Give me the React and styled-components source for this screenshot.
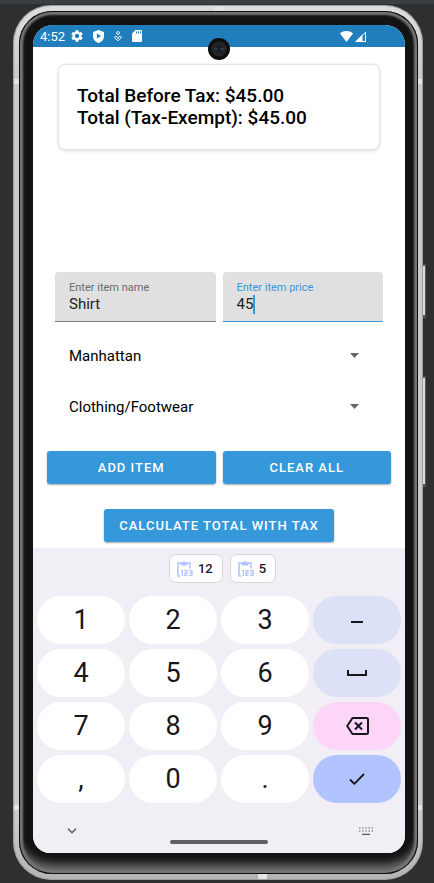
import React, { useState } from "react";
import styled, { createGlobalStyle } from "styled-components";

const GlobalStyle = createGlobalStyle`
  *, *::before, *::after { box-sizing: border-box; }
  body {
    margin: 0;
    background: #2d2f31;
    font-family: Roboto, "Liberation Sans", sans-serif;
    color: #000;
  }
  button, input, select { font: inherit; color: inherit; margin: 0; }
`;

const Workspace = styled.div`
  min-height: 100vh;
  padding: 1px 11px 3px 13px;
  border-top: 4px solid #3c3f41;
  display: flex;
`;

const Phone = styled.div`
  position: relative;
  flex: 1;
  display: flex;
  padding: 6px 5px 6px 6px;
  border-radius: 38px;
  background:
    linear-gradient(#e6e6e6, #e6e6e6) 50% 0 / 9px 6px no-repeat,
    linear-gradient(#e6e6e6, #e6e6e6) 61% 100% / 9px 6px no-repeat,
    linear-gradient(#e6e6e6, #e6e6e6) 0 74px / 6px 5px no-repeat,
    linear-gradient(#e6e6e6, #e6e6e6) 100% 74px / 6px 5px no-repeat,
    linear-gradient(#e6e6e6, #e6e6e6) 0 92% / 6px 5px no-repeat,
    linear-gradient(#e6e6e6, #e6e6e6) 100% 92% / 6px 5px no-repeat,
    linear-gradient(to bottom, #dedede, #cbcbcb 8%, #cbcbcb 92%, #b4b4b4);
  box-shadow: inset 0 0 1px 1px #9b9b9b;
`;

const HardwareKey = styled.span`
  position: absolute;
  left: 100%;
  top: ${(p) => p.$top}px;
  width: 3px;
  height: ${(p) => p.$length}px;
  background: #dcdcdc;
  border: solid #555;
  border-width: 2px 1px 3px 0;
`;

const Bezel = styled.div`
  flex: 1;
  display: flex;
  padding: 14px 13px 21px 14px;
  border-radius: 33px;
  background: #131313;
  box-shadow:
    inset 0 0 0 1px #0c0c0c,
    inset 0 0 2px 4px #757575,
    inset 0 -13px 8px -3px #6c6c6c;
`;

const Screen = styled.div`
  position: relative;
  flex: 1;
  min-width: 0;
  display: flex;
  flex-direction: column;
  overflow: hidden;
  border-radius: 20px 20px 17px 17px;
  background: #fff;
`;

const StatusBar = styled.header`
  height: 22px;
  padding: 0 39px 0 7px;
  display: flex;
  align-items: center;
  justify-content: space-between;
  background: #217ebd;
  color: #fff;
  font-size: 13px;
`;

const StatusGroup = styled.div`
  display: flex;
  align-items: center;
  gap: ${(p) => p.$gap}px;
`;

const Camera = styled.span`
  position: absolute;
  top: 13px;
  left: 50%;
  width: 22px;
  height: 22px;
  margin-left: -11px;
  border-radius: 50%;
  background:
    radial-gradient(circle at 8px 11px, #2c5660 0, transparent 2px),
    radial-gradient(circle at 14px 11px, #34507c 0, transparent 2px),
    radial-gradient(circle, #1a1b1d 0 3px, #232426 5px 7px, #0e0e0f 8px);
`;

const Content = styled.main`
  flex: 1;
  padding: 18px 14px 6px;
  display: flex;
  flex-direction: column;
`;

const TotalsCard = styled.section`
  margin: 0 12px;
  min-height: 82px;
  padding: 20px 18px;
  border-radius: 6px;
  background: #fff;
  box-shadow: 0 0 2px 1px #dedede, 0 2px 4px #e4e4e4;
  font-size: 19px;
  font-weight: 500;
  line-height: 22px;
`;

const TotalLine = styled.p`
  margin: 0;
`;

const ItemList = styled.ul`
  flex: 1;
  margin: 0;
  padding: 0;
`;

const FieldRow = styled.div`
  display: flex;
  gap: 7px;
  padding: 0 8px;
`;

const Field = styled.label`
  flex: 1;
  min-width: 0;
  height: 50px;
  padding: 9px 14px 0;
  display: flex;
  flex-direction: column;
  border-radius: 4px 4px 0 0;
  background: #e0e0e0;
  border-bottom: 1px solid ${(p) => (p.$active ? "#3498db" : "#808080")};
  color: ${(p) => (p.$active ? "#3498db" : "#6b6b6b")};
  font-size: 11px;
  line-height: 13px;
`;

const InputLine = styled.span`
  display: flex;
  align-items: center;
  height: 20px;
`;

const TextInput = styled.input`
  width: 100%;
  min-width: 0;
  padding: 0;
  border: 0;
  outline: 0;
  background: transparent;
  color: #222;
  font-size: 15px;
  line-height: 20px;
  field-sizing: ${(p) => (p.$hug ? "content" : "fixed")};
  ${(p) => p.$hug && "width: auto;"}
`;

const Caret = styled.span`
  width: 2px;
  height: 19px;
  background: #3498db;
`;

const Selects = styled.div`
  padding: 8px 8px 0;
`;

const SelectRow = styled.label`
  display: flex;
  align-items: center;
  height: 51px;
  padding: 0 24px 0 14px;
`;

const SelectBox = styled.select`
  flex: 1;
  height: 100%;
  padding: 0;
  border: 0;
  outline: 0;
  appearance: none;
  background: transparent;
  font-size: 15px;
`;

const ButtonRow = styled.div`
  display: flex;
  justify-content: center;
  gap: 7px;
  margin-top: ${(p) => p.$top}px;
`;

const ActionButton = styled.button`
  flex: ${(p) => (p.$fill ? "1" : "none")};
  height: 33px;
  padding: 0 15px;
  border: 0;
  border-radius: 3px;
  background: #3498db;
  box-shadow: 0 1px 2px #00000055;
  color: #fff;
  font-size: 13px;
  font-weight: 500;
  letter-spacing: 1px;
  text-transform: uppercase;
`;

const Keyboard = styled.section`
  padding: 6px 4px 9px;
  background: #f1eff5;
  color: #17171b;
`;

const Suggestions = styled.div`
  display: flex;
  justify-content: center;
  gap: 7px;
  margin-left: 7px;
`;

const Chip = styled.button`
  display: flex;
  align-items: center;
  gap: 5px;
  height: 29px;
  padding: 0 9px 0 7px;
  border: 1px solid #d8d6dc;
  border-radius: 7px;
  background: #fff;
  font-size: 13px;
  font-weight: 500;
`;

const Keys = styled.div`
  display: grid;
  grid-template-columns: repeat(4, 1fr);
  gap: 5px 4px;
  margin-top: 13px;
`;

const keyColors = {
  digit: "#fff",
  symbol: "#dde1f8",
  erase: "#fdd5f8",
  enter: "#b2c4ff",
};

const Key = styled.button`
  display: flex;
  align-items: center;
  justify-content: center;
  height: 48px;
  padding: 0;
  border: 0;
  border-radius: 24px;
  background: ${(p) => keyColors[p.$kind]};
  font-size: 27px;
`;

const KeyboardFooter = styled.footer`
  display: flex;
  justify-content: space-between;
  align-items: center;
  margin-top: 24px;
  padding: 0 28px 0 30px;
`;

const FooterButton = styled.button`
  display: flex;
  padding: 0;
  border: 0;
  background: transparent;
  color: #5a595e;
`;

const HomeHandle = styled.div`
  width: 98px;
  height: 4px;
  margin: 5px auto 0;
  border-radius: 2px;
  background: #605f63;
`;

const GearIcon = () => (
  <svg width="12" height="12" viewBox="2 2 20 20" fill="currentColor" aria-hidden="true">
    <path d="M19.14 12.94c.04-.3.06-.61.06-.94s-.02-.64-.07-.94l2.03-1.58a.49.49 0 0 0 .12-.61l-1.92-3.32a.49.49 0 0 0-.59-.22l-2.39.96a7 7 0 0 0-1.62-.94l-.36-2.54a.48.48 0 0 0-.48-.41h-3.84a.47.47 0 0 0-.47.41l-.36 2.54c-.59.24-1.13.57-1.62.94l-2.39-.96a.48.48 0 0 0-.59.22L2.74 8.87a.47.47 0 0 0 .12.61l2.03 1.58a7 7 0 0 0 0 1.88l-2.03 1.58a.49.49 0 0 0-.12.61l1.92 3.32c.12.22.37.29.59.22l2.39-.96c.5.38 1.03.7 1.62.94l.36 2.54c.05.24.24.41.48.41h3.84c.24 0 .44-.17.47-.41l.36-2.54a7 7 0 0 0 1.62-.94l2.39.96c.22.08.47 0 .59-.22l1.92-3.32a.47.47 0 0 0-.12-.61zM12 15.6a3.6 3.6 0 1 1 0-7.2 3.6 3.6 0 0 1 0 7.2z" />
  </svg>
);

const ShieldIcon = () => (
  <svg width="11" height="13" viewBox="0 0 11 13" aria-hidden="true">
    <path d="M5.500 0 11 2v4.200c0 3.300-2.300 5.800-5.500 6.800C2.300 12 0 9.500 0 6.200V2z" fill="#fff" />
    <path d="M3.900 3.600v5L8 6.100z" fill="#217ebd" />
  </svg>
);

const CareIcon = () => (
  <svg width="8" height="11" viewBox="0 0 8 11" fill="none" stroke="#e4f0f8" aria-hidden="true">
    <circle cx="4" cy="2" r="1.400" />
    <path d="M4 9.800.9 7c-.8-1.500 1-2.500 2-1.300L5 7.500M4 9.800 7.100 7c.8-1.500-1-2.500-2-1.300L3 7.500" />
  </svg>
);

const CardIcon = () => (
  <svg width="10" height="12" viewBox="0 0 10 12" aria-hidden="true">
    <path d="M3.500 0H9a1 1 0 0 1 1 1v10a1 1 0 0 1-1 1H1a1 1 0 0 1-1-1V3.500z" fill="#fff" />
    <path d="M4.500 1.500v2M6.500 1.500v2M8.500 1.500v2" stroke="#217ebd" />
  </svg>
);

const WifiIcon = () => (
  <svg width="13" height="11" viewBox="0 0 13 11" fill="#fff" aria-hidden="true">
    <path d="M6.500 11 0 2.500C3.500-.7 9.500-.7 13 2.500z" />
  </svg>
);

const SignalIcon = () => (
  <svg width="11" height="11" viewBox="0 0 11 11" aria-hidden="true">
    <path d="M10.500 1.200v9.300H1.200z" fill="none" stroke="#fff" />
    <path d="M7.500 3.500V11H0z" fill="#fff" />
  </svg>
);

const ArrowIcon = () => (
  <svg width="9" height="5" viewBox="0 0 9 5" fill="#666" aria-hidden="true">
    <path d="M0 0h9L4.500 5z" />
  </svg>
);

const ClipboardIcon = () => (
  <svg width="16" height="16" viewBox="0 0 16 16" fill="none" stroke="#b2c4ff" aria-hidden="true">
    <path d="M3 15H1V2h12v5.500" strokeWidth="1.500" />
    <path d="M3.500 1.500h7v3h-7z" fill="#b2c4ff" stroke="none" />
    <circle cx="7" cy="1.500" r="1.500" fill="#b2c4ff" stroke="none" />
    <path d="M4 9.600h1.400v5.400M7.200 9.600h2.800v2.400H7.900v2.400h2.700M12 9.600h3v4.800h-3M12.500 12H15" strokeWidth="1.300" />
  </svg>
);

const MinusIcon = () => (
  <svg width="12" height="28" viewBox="0 0 12 28" stroke="currentColor" aria-hidden="true">
    <path d="M0 16h12" strokeWidth="2" />
  </svg>
);

const SpaceIcon = () => (
  <svg width="20" height="6" viewBox="0 0 20 6" fill="none" stroke="currentColor" aria-hidden="true">
    <path d="M1 0v5h18V0" strokeWidth="2" />
  </svg>
);

const BackspaceIcon = () => (
  <svg width="23" height="18" viewBox="0 0 23 18" fill="none" stroke="currentColor" strokeWidth="2" aria-hidden="true">
    <path d="M6.500 1H20.500A1.500 1.500 0 0 1 22 2.500v13a1.500 1.500 0 0 1-1.500 1.500H6.500L1.200 9z" strokeLinejoin="round" />
    <path d="m9 5.500 7 7m0-7-7 7" />
  </svg>
);

const CheckIcon = () => (
  <svg width="16" height="12" viewBox="0 0 16 12" fill="none" stroke="currentColor" strokeWidth="1.800" aria-hidden="true">
    <path d="m1 6.500 4.300 4.300L15 1" />
  </svg>
);

const ChevronIcon = () => (
  <svg width="10" height="6" viewBox="0 0 10 6" fill="none" stroke="currentColor" strokeWidth="1.500" aria-hidden="true">
    <path d="m1 .8 4 4 4-4" />
  </svg>
);

const KeyboardIcon = () => (
  <svg width="14" height="8" viewBox="0 0 14 8" stroke="currentColor" strokeWidth="1.200" aria-hidden="true">
    <path d="M0 1h14M0 4h14" strokeDasharray="1.400 1.750" />
    <path d="M3 7.300h8" />
  </svg>
);

const keys = [
  { label: "1" }, { label: "2" }, { label: "3" },
  { label: "Minus", kind: "symbol", icon: <MinusIcon /> },
  { label: "4" }, { label: "5" }, { label: "6" },
  { label: "Space", kind: "symbol", icon: <SpaceIcon /> },
  { label: "7" }, { label: "8" }, { label: "9" },
  { label: "Backspace", kind: "erase", icon: <BackspaceIcon /> },
  { label: "," }, { label: "0" }, { label: "." },
  { label: "Done", kind: "enter", icon: <CheckIcon /> },
];

export default function App() {
  const [name, setName] = useState("Shirt");
  const [price, setPrice] = useState("45");

  return (
    <Workspace>
      <GlobalStyle />
      <Phone>
        <HardwareKey $top={259} $length={54} />
        <HardwareKey $top={371} $length={111} />
        <Bezel>
          <Screen>
            <StatusBar>
              <StatusGroup $gap={6}>
                <span>4:52</span>
                <StatusGroup $gap={10}>
                  <GearIcon />
                  <ShieldIcon />
                  <CareIcon />
                  <CardIcon />
                </StatusGroup>
              </StatusGroup>
              <StatusGroup $gap={2}>
                <WifiIcon />
                <SignalIcon />
              </StatusGroup>
            </StatusBar>
            <Camera />
            <Content>
              <TotalsCard>
                <TotalLine>Total Before Tax: $45.00</TotalLine>
                <TotalLine>Total (Tax-Exempt): $45.00</TotalLine>
              </TotalsCard>
              <ItemList />
              <FieldRow>
                <Field>
                  Enter item name
                  <InputLine>
                    <TextInput value={name} onChange={(e) => setName(e.target.value)} />
                  </InputLine>
                </Field>
                <Field $active>
                  Enter item price
                  <InputLine>
                    <TextInput $hug inputMode="decimal" value={price} onChange={(e) => setPrice(e.target.value)} />
                    <Caret />
                  </InputLine>
                </Field>
              </FieldRow>
              <Selects>
                <SelectRow>
                  <SelectBox aria-label="Borough" defaultValue="Manhattan">
                    <option>Manhattan</option>
                  </SelectBox>
                  <ArrowIcon />
                </SelectRow>
                <SelectRow>
                  <SelectBox aria-label="Category" defaultValue="Clothing/Footwear">
                    <option>Clothing/Footwear</option>
                  </SelectBox>
                  <ArrowIcon />
                </SelectRow>
              </Selects>
              <ButtonRow $top={19}>
                <ActionButton type="button" $fill>Add item</ActionButton>
                <ActionButton type="button" $fill>Clear all</ActionButton>
              </ButtonRow>
              <ButtonRow $top={25}>
                <ActionButton type="button">Calculate total with tax</ActionButton>
              </ButtonRow>
            </Content>
            <Keyboard>
              <Suggestions>
                <Chip type="button"><ClipboardIcon />12</Chip>
                <Chip type="button"><ClipboardIcon />5</Chip>
              </Suggestions>
              <Keys>
                {keys.map(({ label, kind = "digit", icon }) => (
                  <Key key={label} type="button" $kind={kind} aria-label={label}>
                    {icon || label}
                  </Key>
                ))}
              </Keys>
              <KeyboardFooter>
                <FooterButton type="button" aria-label="Hide keyboard"><ChevronIcon /></FooterButton>
                <FooterButton type="button" aria-label="Switch keyboard"><KeyboardIcon /></FooterButton>
              </KeyboardFooter>
              <HomeHandle />
            </Keyboard>
          </Screen>
        </Bezel>
      </Phone>
    </Workspace>
  );
}
